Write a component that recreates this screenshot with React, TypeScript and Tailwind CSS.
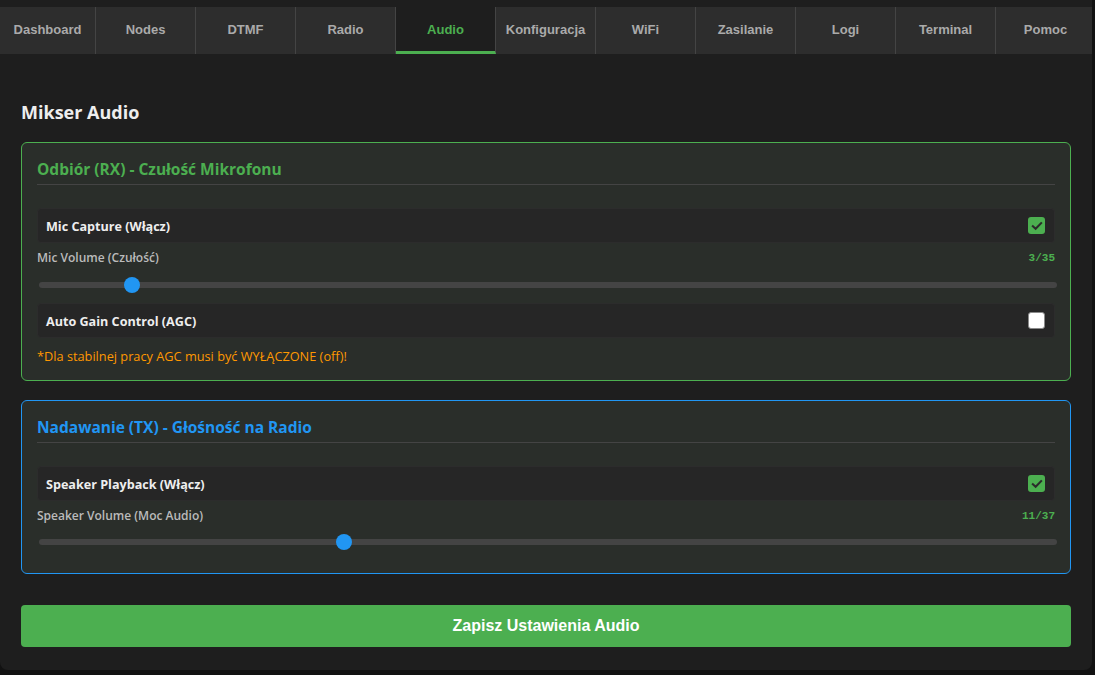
import React from 'react'

const tabs = ['Dashboard', 'Nodes', 'DTMF', 'Radio', 'Audio', 'Konfiguracja', 'WiFi', 'Zasilanie', 'Logi', 'Terminal', 'Pomoc']

const uiFont = { fontFamily: '"Open Sans", "Noto Sans", sans-serif' }

function Check({ checked }: { checked: boolean }) {
  if (!checked) {
    return <div className="w-[17px] h-[17px] rounded-[3px] bg-white border border-[#8a8a8a]" />
  }
  return (
    <div className="w-[17px] h-[17px] rounded-[3px] bg-[#4caf50] flex items-center justify-center">
      <svg viewBox="0 0 16 16" className="w-[12px] h-[12px]">
        <path d="M2.5 8.3 L6.2 11.8 L13.5 4.2" fill="none" stroke="#2b2b2b" strokeWidth="2.8" strokeLinecap="square" />
      </svg>
    </div>
  )
}

function ToggleRow({ label, checked }: { label: string; checked: boolean }) {
  return (
    <div className="h-[35px] bg-[#262626] rounded-[4px] border border-[#2c2c2c] flex items-center justify-between pl-[8px] pr-[9px]">
      <span className="text-[12.6px] font-bold text-[#eeeeee] pt-[3px]">{label}</span>
      <Check checked={checked} />
    </div>
  )
}

function Slider({ label, value, max, percent, gap }: { label: string; value: number; max: number; percent: number; gap: string }) {
  return (
    <div className="mb-[10px]">
      <div className="flex items-center justify-between mt-[7px] h-[16px]">
        <span className="text-[12px] font-semibold text-[#bbbbbb]">{label}</span>
        <span className="text-[11px] font-bold text-[#4caf50]" style={{ fontFamily: '"Liberation Mono", monospace' }}>
          {value}/{max}
        </span>
      </div>
      <div className={`relative h-[16px] ${gap} ml-[2px] -mr-[2px]`}>
        <div className="absolute left-0 right-0 top-[5px] h-[6px] rounded-full bg-[#444444]" />
        <div
          className="absolute top-0 w-[16px] h-[16px] rounded-full bg-[#2196f3] -translate-x-1/2"
          style={{ left: `${percent}%` }}
        />
      </div>
    </div>
  )
}

function Card({ title, color, children, pb }: { title: string; color: 'green' | 'blue'; children: React.ReactNode; pb: string }) {
  const border = color === 'green' ? 'border-[#4caf50]' : 'border-[#2196f3]'
  const text = color === 'green' ? 'text-[#4caf50]' : 'text-[#2196f3]'
  return (
    <div className={`border ${border} rounded-[6px] bg-[#2a2e2a] px-[15px] pt-[15px] ${pb}`}>
      <h3 className={`text-[15.5px] leading-[20px] font-bold ${text} pt-[1px] pb-[5px] border-b border-[#444444]`}>{title}</h3>
      <div className="mt-[23px]">{children}</div>
    </div>
  )
}

export default function App() {
  return (
    <div className="min-h-screen bg-[#121212]" style={uiFont}>
      <div className="w-[1092px] h-[670px] bg-[#1e1e1e] rounded-b-[8px] pt-[7px]">
        <nav className="h-[47px] bg-[#2d2d2d] flex overflow-hidden" style={{ fontFamily: '"Liberation Sans", Arial, sans-serif' }}>
          {tabs.map((t, i) => {
            const active = t === 'Audio'
            return (
              <div
                key={t}
                className={`${i === 0 ? 'w-[96px]' : 'w-[100px]'} shrink-0 flex items-center justify-center text-[13px] font-bold border-r border-[#444444] ${
                  active ? 'bg-[#1e1e1e] text-[#4caf50] border-b-[3px] border-b-[#4caf50] pt-[1px]' : 'text-[#aaaaaa] pb-[2px]'
                }`}
              >
                {t}
              </div>
            )
          })}
        </nav>

        <div className="px-[21px]">
          <h2 className="mt-[46px] text-[18px] leading-[24px] font-bold text-[#eeeeee] mb-[18px]">Mikser Audio</h2>

          <Card title="Odbiór (RX) - Czułość Mikrofonu" color="green" pb="pb-[15px]">
            <ToggleRow label="Mic Capture (Włącz)" checked />
            <Slider label="Mic Volume (Czułość)" value={3} max={35} percent={9.1} gap="mt-[11px]" />
            <ToggleRow label="Auto Gain Control (AGC)" checked={false} />
            <p className="mt-[9px] text-[12.75px] leading-[18px] text-[#ff9800]">*Dla stabilnej pracy AGC musi być WYŁĄCZONE (off)!</p>
          </Card>

          <div className="mt-[19px]">
            <Card title="Nadawanie (TX) - Głośność na Radio" color="blue" pb="pb-[13px]">
              <ToggleRow label="Speaker Playback (Włącz)" checked />
              <Slider label="Speaker Volume (Moc Audio)" value={11} max={37} percent={30} gap="mt-[10px]" />
            </Card>
          </div>

          <button
            className="mt-[31px] w-full h-[42px] rounded-[4px] bg-[#4caf50] text-white text-[16px] font-bold"
            style={{ fontFamily: '"Liberation Sans", Arial, sans-serif' }}
          >
            Zapisz Ustawienia Audio
          </button>
        </div>
      </div>
    </div>
  )
}
